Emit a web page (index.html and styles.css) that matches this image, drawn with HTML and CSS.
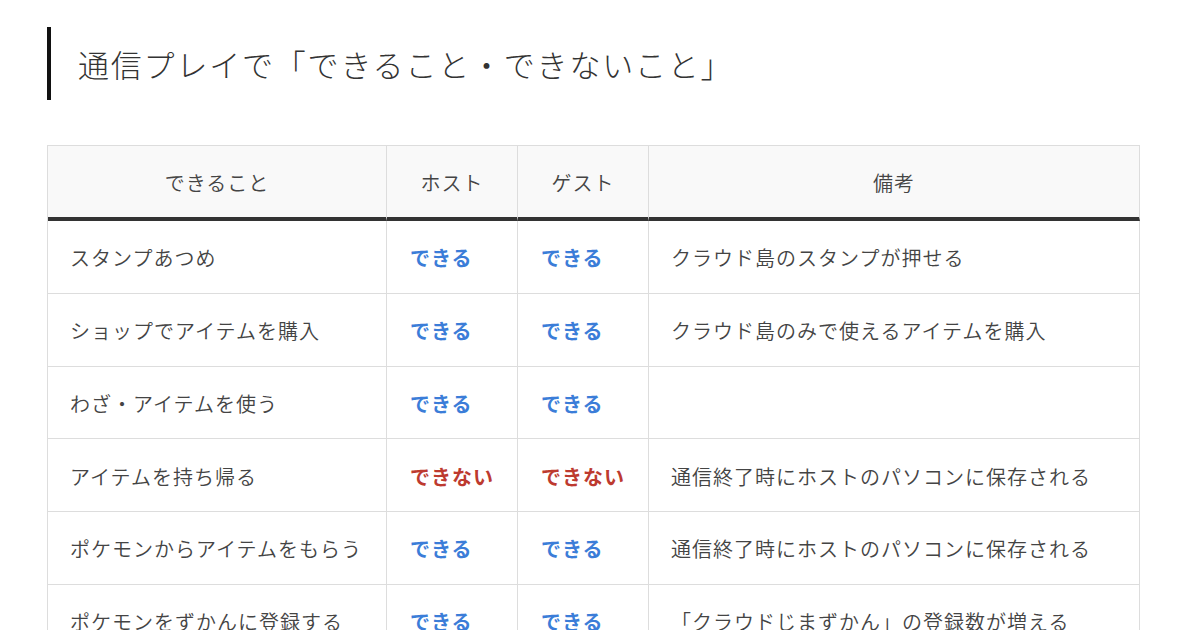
FILE: index.html
```html
<!DOCTYPE html>
<html lang="ja">
<head>
<meta charset="utf-8">
<link rel="stylesheet" href="styles.css">
</head>
<body>
<div class="page">
  <h2 class="heading">通信プレイで「できること・できないこと」</h2>
  <table class="tbl">
    <colgroup>
      <col class="c1"><col class="c2"><col class="c3"><col class="c4">
    </colgroup>
    <thead>
      <tr><th>できること</th><th>ホスト</th><th>ゲスト</th><th>備考</th></tr>
    </thead>
    <tbody>
      <tr><td>スタンプあつめ</td><td class="ok">できる</td><td class="ok">できる</td><td>クラウド島のスタンプが押せる</td></tr>
      <tr><td>ショップでアイテムを購入</td><td class="ok">できる</td><td class="ok">できる</td><td>クラウド島のみで使えるアイテムを購入</td></tr>
      <tr><td>わざ・アイテムを使う</td><td class="ok">できる</td><td class="ok">できる</td><td></td></tr>
      <tr><td>アイテムを持ち帰る</td><td class="ng">できない</td><td class="ng">できない</td><td>通信終了時にホストのパソコンに保存される</td></tr>
      <tr><td>ポケモンからアイテムをもらう</td><td class="ok">できる</td><td class="ok">できる</td><td>通信終了時にホストのパソコンに保存される</td></tr>
      <tr><td>ポケモンをずかんに登録する</td><td class="ok">できる</td><td class="ok">できる</td><td>「クラウドじまずかん」の登録数が増える</td></tr>
    </tbody>
  </table>
</div>
</body>
</html>
```

FILE: styles.css
```css
html, body {
  margin: 0;
  padding: 0;
  background: #fff;
}
body {
  font-family: "Noto Sans CJK JP", "Noto Sans", sans-serif;
  color: #333;
}
.page {
  padding: 27px 0 0 47px;
  width: 1093px;
}
.heading {
  margin: 0 0 45px 0;
  height: 73px;
  box-sizing: border-box;
  border-left: 4px solid #111;
  padding-left: 27px;
  font-size: 31px;
  letter-spacing: 1.8px;
  font-weight: 300;
  line-height: 73px;
  color: #333;
}
.tbl {
  width: 1093px;
  border-collapse: separate;
  border-spacing: 0;
  border-top: 1px solid #ddd;
  border-left: 1px solid #ddd;
  table-layout: fixed;
}
.c1 { width: 339px; }
.c2 { width: 131px; }
.c3 { width: 131px; }
.c4 { width: 491px; }
.tbl th, .tbl td {
  border-right: 1px solid #ddd;
  border-bottom: 1px solid #ddd;
  font-size: 20px;
  letter-spacing: 1px;
  padding: 2px 22px 0 22px;
  white-space: nowrap;
  overflow: hidden;
  box-sizing: content-box;
}
.tbl th {
  height: 69px;
  background: #f9f9f9;
  font-weight: 350;
  color: #444;
  text-align: center;
  border-bottom: 4px solid #333;
}
.tbl td {
  height: 69.75px;
  text-align: left;
  font-weight: 350;
  color: #444;
}
.tbl td.ok {
  color: #3b7dd8;
  font-weight: 700;
  padding-left: 23px;
}
.tbl td.ng {
  color: #bd3a2f;
  font-weight: 700;
  padding-left: 23px;
}
```
